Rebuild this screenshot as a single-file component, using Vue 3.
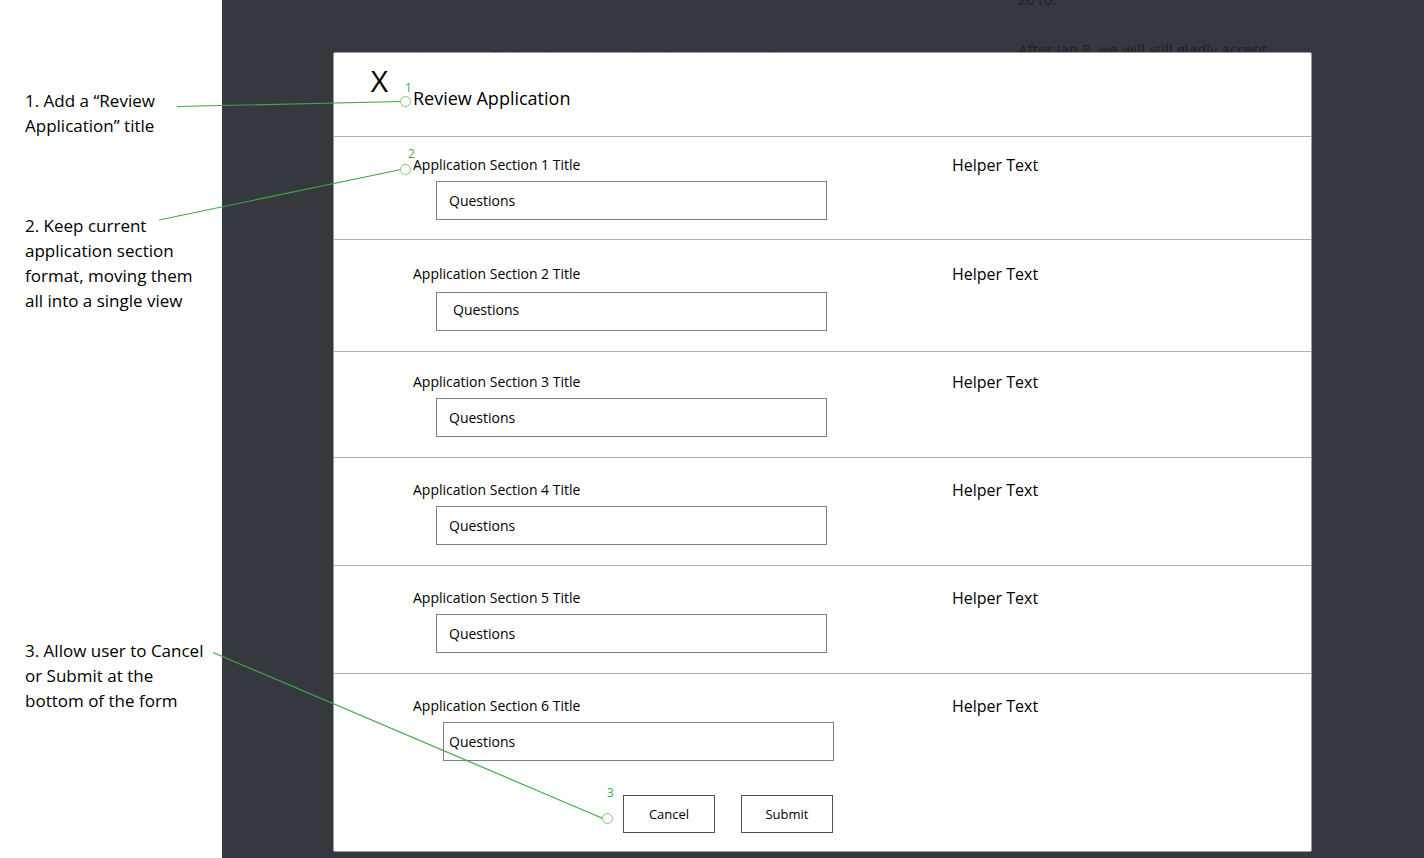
<script setup>
const notes = [
  { id: 1, text: '1. Add a “Review Application” title' },
  { id: 2, text: '2. Keep current application section format, moving them all into a single view' },
  { id: 3, text: '3. Allow user to Cancel or Submit at the bottom of the form' },
]

const sections = [
  { id: 1, variant: 'compact' },
  { id: 2, variant: 'roomy' },
  { id: 3, variant: 'snug' },
  { id: 4, variant: '' },
  { id: 5, variant: '' },
  { id: 6, variant: 'last' },
]
</script>

<template>
  <div class="board">
    <aside class="notes">
      <p v-for="n in notes" :key="n.id" class="note" :class="'note-' + n.id">{{ n.text }}</p>
    </aside>

    <main class="backdrop">
      <div class="underlay" aria-hidden="true">
        <div class="under-card">Please specify that all have been alloted and are added by</div>
        <div class="under-side">
          <p>2016.</p>
          <p>After Jan 8, we will still gladly accept</p>
        </div>
      </div>

      <form class="modal" @submit.prevent>
        <header class="head">
          <button type="button" class="close" aria-label="Close">X</button>
          <h1>Review Application</h1>
        </header>

        <section v-for="s in sections" :key="s.id" class="section" :class="s.variant">
          <div class="field">
            <label :for="'q' + s.id">Application Section {{ s.id }} Title</label>
            <input :id="'q' + s.id" type="text" value="Questions" />
          </div>
          <p class="helper">Helper Text</p>
        </section>

        <footer class="actions">
          <button type="button">Cancel</button>
          <button type="submit">Submit</button>
        </footer>
      </form>
    </main>

    <svg class="callouts" width="1424" height="858" viewBox="0 0 1424 858">
      <g fill="none" stroke="#3daa41" stroke-width="1.2">
        <path d="M177 106.500L401 101.500M159 220L401 169.500M213 652.500L603 818.500" />
      </g>
      <g fill="#fff" stroke="#7cc87f" stroke-width="1">
        <circle cx="405.500" cy="101.500" r="5" />
        <circle cx="405.500" cy="169.500" r="5" />
        <circle cx="607.500" cy="818.500" r="5" />
      </g>
      <g class="marks" fill="#3daa41">
        <text x="405" y="92">1</text>
        <text x="408" y="158">2</text>
        <text x="607" y="797">3</text>
      </g>
    </svg>
  </div>
</template>

<style>
body {
  background: #fff;
}
</style>

<style scoped>
.board {
  position: relative;
  display: grid;
  grid-template-columns: 222px 1fr;
  min-height: 100vh;
  overflow: hidden;
  font-family: "Open Sans", "Noto Sans", sans-serif;
  color: #000;
}

.board * {
  box-sizing: border-box;
}

p,
h1 {
  margin: 0;
  font-weight: 400;
}

.notes {
  padding: 88px 16px 0 25px;
  font-size: 17px;
  line-height: 25px;
}

.note-2 {
  margin-top: 75px;
}

.note-3 {
  margin-top: 325px;
}

.backdrop {
  position: relative;
  padding: 52px 112px 6px 111px;
  background: #363840;
}

.underlay {
  position: absolute;
  inset: 0;
  overflow: hidden;
  color: #202228;
  font-size: 15px;
  line-height: 25px;
  white-space: nowrap;
}

.under-card {
  position: absolute;
  left: 161px;
  top: 28px;
  width: 439px;
  height: 60px;
  padding: 16px 30px;
  background: #343940;
  font-size: 14px;
}

.under-side {
  position: absolute;
  left: 796px;
  top: -13px;
}

.under-side p + p {
  margin-top: 25px;
}

.modal {
  position: relative;
  border: 1px solid #999b9f;
  border-radius: 2px;
  background: #fff;
}

.head {
  display: flex;
  align-items: flex-start;
  gap: 24px;
  height: 83px;
  padding: 8px 0 0 36px;
}

.close {
  width: 19px;
  padding: 0;
  border: 0;
  background: none;
  color: #000;
  font: inherit;
  font-size: 30px;
  line-height: 40px;
}

h1 {
  padding-top: 24px;
  font-size: 18px;
  line-height: 26px;
}

.section {
  display: grid;
  grid-template-columns: 539px 1fr;
  height: 108px;
  padding: 20px 0 0 79px;
  border-top: 1px solid #b0b0b0;
}

.field {
  display: flex;
  flex-direction: column;
}

label {
  font-size: 14px;
  line-height: 24px;
}

input {
  width: 391px;
  height: 39px;
  margin: 4px 0 0 23px;
  padding: 0 12px;
  border: 1px solid #808080;
  border-radius: 0;
  background: #fff;
  color: #000;
  font: inherit;
  font-size: 14px;
}

.helper {
  font-size: 16px;
  line-height: 24px;
}

.compact {
  height: 103px;
  padding-top: 16px;
}

.snug {
  height: 106px;
  padding-top: 18px;
}

.roomy {
  height: 112px;
  padding-top: 22px;
}

.roomy input {
  margin-top: 6px;
  padding: 0 16px 4px;
}

.last input {
  margin-left: 30px;
  padding: 0 5px;
}

.actions {
  display: flex;
  gap: 26px;
  padding: 14px 0 18px 289px;
}

.actions button {
  width: 92px;
  height: 38px;
  padding: 0;
  border: 1px solid #505050;
  border-radius: 0;
  background: #fff;
  color: #000;
  font: inherit;
  font-size: 13px;
}

.callouts {
  position: absolute;
  left: 0;
  top: 0;
  pointer-events: none;
}

.marks {
  font-size: 12px;
}
</style>
